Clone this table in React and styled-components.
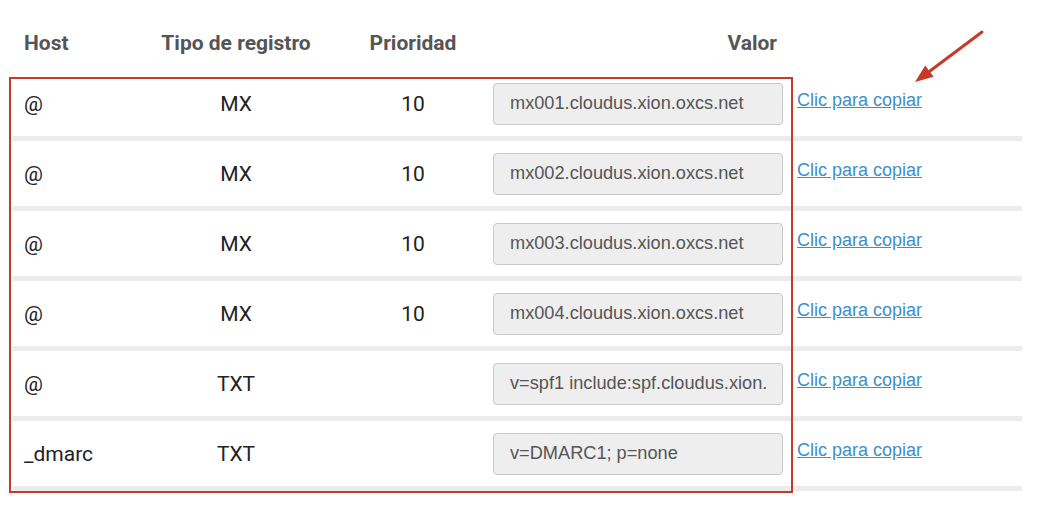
import React from 'react'
import styled, { createGlobalStyle } from 'styled-components'

const GlobalStyle = createGlobalStyle`
  body {
    margin: 0;
    background: #fff;
    font-family: Roboto, "Liberation Sans", sans-serif;
  }
`

const Page = styled.div`
  position: relative;
  width: 1040px;
  height: 508px;
  padding-left: 13px;
  box-sizing: border-box;
  overflow: hidden;
`

const Table = styled.div`
  width: 1009px;
`

const Row = styled.div`
  display: grid;
  grid-template-columns: 147px 152px 168px 303px 1fr;
  align-items: center;
  box-sizing: border-box;
  height: ${props => props.header ? '71px' : '70px'};
  padding-top: ${props => props.header ? '14px' : '0'};
  border-bottom: ${props => props.header ? 'none' : '5px solid #ececec'};
`

const HeadCell = styled.div`
  font-size: 21px;
  font-weight: 700;
  color: #555;
  padding-left: ${props => props.pl || '0'};
  padding-right: ${props => props.pr || '0'};
  text-align: ${props => props.align || 'left'};
`

const Cell = styled.div`
  font-size: 21px;
  color: #222;
  padding-left: ${props => props.pl || '0'};
  text-align: ${props => props.align || 'left'};
`

const ValueInput = styled.input`
  justify-self: end;
  width: 290px;
  height: 42px;
  margin: 0;
  box-sizing: border-box;
  background: #eeeeee;
  border: 1px solid #c9c9c9;
  border-radius: 4px;
  padding: 0 16px 0 16px;
  font-family: "Liberation Sans", Arial, sans-serif;
  font-size: 18.2px;
  color: #555;
  outline: none;
`

const CopyLink = styled.a`
  padding-left: 14px;
  margin-top: -6px;
  font-family: "Liberation Sans", Arial, sans-serif;
  font-size: 18px;
  color: #3d8ecb;
  text-decoration: underline;
  cursor: pointer;
`

const Highlight = styled.div`
  position: absolute;
  left: 9px;
  top: 77px;
  width: 784px;
  height: 416px;
  box-sizing: border-box;
  border: 2px solid #c23b2c;
  pointer-events: none;
`

const Arrow = styled.svg`
  position: absolute;
  left: 900px;
  top: 20px;
`

const records = [
  { host: '@', type: 'MX', prio: '10', value: 'mx001.cloudus.xion.oxcs.net' },
  { host: '@', type: 'MX', prio: '10', value: 'mx002.cloudus.xion.oxcs.net' },
  { host: '@', type: 'MX', prio: '10', value: 'mx003.cloudus.xion.oxcs.net' },
  { host: '@', type: 'MX', prio: '10', value: 'mx004.cloudus.xion.oxcs.net' },
  { host: '@', type: 'TXT', prio: '', value: 'v=spf1 include:spf.cloudus.xion.oxcs.net ~all' },
  { host: '_dmarc', type: 'TXT', prio: '', value: 'v=DMARC1; p=none' },
]

export default function App() {
  return (
    <Page>
      <GlobalStyle />
      <Table>
        <Row header>
          <HeadCell pl="11px">Host</HeadCell>
          <HeadCell align="center">Tipo de registro</HeadCell>
          <HeadCell align="center" pl="34px">Prioridad</HeadCell>
          <HeadCell align="right" pr="6px">Valor</HeadCell>
          <div />
        </Row>
        {records.map((r, i) => (
          <Row key={i}>
            <Cell pl="11px">{r.host}</Cell>
            <Cell align="center">{r.type}</Cell>
            <Cell align="center" pl="34px">{r.prio}</Cell>
            <ValueInput readOnly value={r.value} />
            <CopyLink>Clic para copiar</CopyLink>
          </Row>
        ))}
      </Table>
      <Highlight />
      <Arrow width="100" height="80" viewBox="0 0 100 80">
        <line x1="82" y1="12" x2="26" y2="54" stroke="#c63a2a" strokeWidth="3" strokeLinecap="round" />
        <polygon points="15,62 33.6,56.8 25.2,45.6" fill="#c63a2a" />
      </Arrow>
    </Page>
  )
}
